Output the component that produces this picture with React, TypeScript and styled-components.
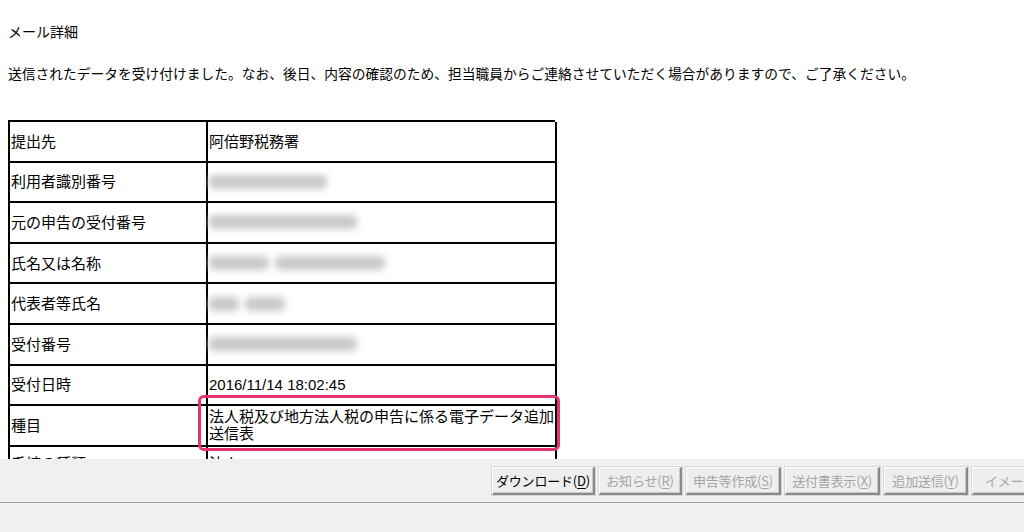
import React from 'react';
import styled, { createGlobalStyle } from 'styled-components';

const GlobalStyle = createGlobalStyle`
  html, body {
    margin: 0;
    padding: 0;
    background: #f0f0f0;
    font-family: "Liberation Sans", "Noto Sans CJK JP", sans-serif;
    color: #000;
  }
`;

interface Row {
  label: string;
  value?: string;
  blurs?: number[];
}

const rows: Row[] = [
  { label: '提出先', value: '阿倍野税務署' },
  { label: '利用者識別番号', blurs: [118] },
  { label: '元の申告の受付番号', blurs: [148] },
  { label: '氏名又は名称', blurs: [60, 110] },
  { label: '代表者等氏名', blurs: [30, 40] },
  { label: '受付番号', blurs: [148] },
  { label: '受付日時', value: '2016/11/14 18:02:45' },
  { label: '種目', value: '法人税及び地方法人税の申告に係る電子データ追加送信表' },
  { label: '手続の種類', value: '法人' },
];

const Page = styled.div`
  width: 1024px;
  height: 532px;
  display: flex;
  flex-direction: column;
  overflow: hidden;
`;

const Content = styled.div`
  height: 459px;
  flex: none;
  background: #fff;
  padding-left: 8px;
  overflow: hidden;
`;

const Title = styled.div`
  margin-top: 24px;
  font-size: 14px;
  line-height: 16px;
`;

const Message = styled.div`
  margin-top: 27px;
  font-size: 13.75px;
  line-height: 16px;
  white-space: nowrap;
`;

const TableWrap = styled.div`
  position: relative;
  margin-top: 37px;
  width: 547px;
`;

const Table = styled.div`
  display: grid;
  grid-template-columns: 198px 349px;
  border-top: 2px solid #000;
  border-left: 2px solid #000;
`;

const Cell = styled.div`
  box-sizing: border-box;
  height: 40.6px;
  border-right: 2px solid #000;
  border-bottom: 2px solid #000;
  display: flex;
  align-items: center;
  padding-left: 1px;
  font-size: 15px;
  line-height: 17px;
`;

const LastCell = styled(Cell)`
  align-items: flex-start;
  padding-top: 8px;
`;

const Blurs = styled.div`
  display: flex;
  gap: 6px;
  align-items: center;
`;

const Blur = styled.span`
  display: inline-block;
  height: 14px;
  background: #c9c9c9;
  border-radius: 5px;
  filter: blur(3.5px);
`;

const Highlight = styled.div`
  position: absolute;
  left: 190px;
  top: 275px;
  width: 362px;
  height: 56px;
  box-sizing: border-box;
  border: 3px solid #e5356b;
  border-radius: 6px;
  pointer-events: none;
`;

const Toolbar = styled.div`
  height: 44px;
  flex: none;
  background: #f0f0f0;
  border-bottom: 1px solid #a0a0a0;
  display: flex;
  align-items: center;
  gap: 4px;
  padding-left: 492px;
  padding-top: 1px;
  box-sizing: border-box;
  overflow: hidden;
  white-space: nowrap;
`;

const Button = styled.button<{ $w: number; $disabled?: boolean }>`
  flex: none;
  width: ${(p) => p.$w}px;
  height: 28px;
  padding: 0;
  background: #eeeeee;
  border-top: 1px solid #fff;
  border-left: 1px solid #fff;
  border-right: 2px solid #8a8a8a;
  border-bottom: 2px solid #8a8a8a;
  box-shadow: inset -1px -1px 0 #c8c8c8, 0 0 0 1px #d8d8d8;
  font-family: "Noto Sans CJK JP", sans-serif;
  font-size: 13px;
  color: ${(p) => (p.$disabled ? '#a6a6a6' : '#000')};
  letter-spacing: -0.2px;

  u {
    text-underline-offset: 2px;
  }
`;

const Status = styled.div`
  flex: 1;
  background: #f0f0f0;
`;

const buttons = [
  { label: 'ダウンロード', key: 'D', w: 103 },
  { label: 'お知らせ', key: 'R', w: 83, disabled: true },
  { label: '申告等作成', key: 'S', w: 95, disabled: true },
  { label: '送付書表示', key: 'X', w: 95, disabled: true },
  { label: '追加送信', key: 'Y', w: 84, disabled: true },
  { label: 'イメージ', key: 'I', w: 90, disabled: true },
];

const App: React.FC = () => (
  <Page>
    <GlobalStyle />
    <Content>
      <Title>メール詳細</Title>
      <Message>
        送信されたデータを受け付けました。なお、後日、内容の確認のため、担当職員からご連絡させていただく場合がありますので、ご了承ください。
      </Message>
      <TableWrap>
        <Table>
          {rows.map((row, idx) => {
            const C = idx === rows.length - 1 ? LastCell : Cell;
            return (
              <React.Fragment key={row.label}>
                <C>{row.label}</C>
                <C>
                  {row.blurs ? (
                    <Blurs>
                      {row.blurs.map((w, i) => (
                        <Blur key={i} style={{ width: w }} />
                      ))}
                    </Blurs>
                  ) : (
                    row.value
                  )}
                </C>
              </React.Fragment>
            );
          })}
        </Table>
        <Highlight />
      </TableWrap>
    </Content>
    <Toolbar>
      {buttons.map((b) => (
        <Button key={b.key} $w={b.w} $disabled={b.disabled}>
          {b.label}(<u>{b.key}</u>)
        </Button>
      ))}
    </Toolbar>
    <Status />
  </Page>
);

export default App;
